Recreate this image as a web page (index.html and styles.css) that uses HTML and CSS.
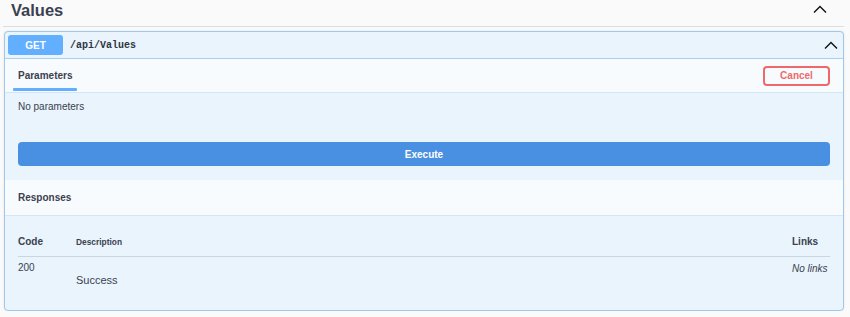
FILE: index.html
```html
<!DOCTYPE html>
<html>
<head>
<meta charset="utf-8">
<link rel="stylesheet" href="styles.css">
</head>
<body>
<div class="wrap">
  <div class="tag-header">
    <h3 class="tag-title">Values</h3>
    <svg class="chev chev-tag" width="14" height="8" viewBox="0 0 14 8"><path d="M1 7.5 L7 1.5 L13 7.5" fill="none" stroke="#111" stroke-width="1.4"/></svg>
  </div>
  <div class="opblock">
    <div class="summary">
      <span class="method">GET</span>
      <span class="path">/api/Values</span>
      <svg class="chev chev-op" width="14" height="8" viewBox="0 0 14 8"><path d="M1 7.5 L7 1.5 L13 7.5" fill="none" stroke="#111" stroke-width="1.4"/></svg>
    </div>
    <div class="tab-header">
      <div class="tab">Parameters</div>
      <button class="cancel">Cancel</button>
    </div>
    <div class="params">
      <p class="no-params">No parameters</p>
      <button class="execute">Execute</button>
    </div>
    <div class="resp-header">Responses</div>
    <div class="resp-body">
      <div class="resp-row resp-head">
        <div class="col-code head-code">Code</div>
        <div class="col-desc head-desc">Description</div>
        <div class="col-links head-links">Links</div>
      </div>
      <div class="resp-row resp-item">
        <div class="col-code item-code">200</div>
        <div class="col-desc item-desc"><p>Success</p></div>
        <div class="col-links item-links">No links</div>
      </div>
    </div>
  </div>
</div>
</body>
</html>
```

FILE: styles.css
```css
html, body {
  margin: 0;
  padding: 0;
  background: #fafafa;
}
body {
  font-family: "Liberation Sans", Arial, sans-serif;
  color: #3b4151;
}
.wrap {
  width: 841px;
  padding-left: 3px;
}
.tag-header {
  height: 26px;
  border-bottom: 1px solid #dcdee2;
  display: flex;
  justify-content: space-between;
  align-items: flex-start;
  padding-left: 8px;
  padding-right: 17px;
}
.tag-title {
  margin: 0;
  font-size: 16.5px;
  line-height: 20px;
  font-weight: bold;
}
.chev-tag {
  margin-top: 5px;
}
.opblock {
  margin-top: 4px;
  margin-left: 1px;
  border: 1px solid #9fc9ee;
  border-radius: 4px;
  background: #e9f4fc;
  box-shadow: 0 0 2px rgba(0,0,0,0.12);
}
.summary {
  height: 26px;
  display: flex;
  align-items: center;
  padding: 0 5px 0 3px;
  border-bottom: 1px solid #a9d0f0;
}
.method {
  width: 55px;
  height: 20px;
  border-radius: 3px;
  background: #61affe;
  color: #fff;
  font-weight: bold;
  font-size: 10px;
  display: flex;
  align-items: center;
  justify-content: center;
}
.path {
  margin-left: 7px;
  font-family: "Liberation Mono", "DejaVu Sans Mono", monospace;
  font-weight: bold;
  font-size: 10px;
  color: #2f3542;
  flex: 1;
}
.tab-header {
  height: 33px;
  display: flex;
  align-items: center;
  justify-content: space-between;
  padding: 0 13px 0 8px;
  background: #f8fbfd;
  border-bottom: 1px solid #d3e6f5;
}
.tab {
  position: relative;
  height: 100%;
  display: flex;
  align-items: center;
  padding: 0 5px 0 5px;
  font-size: 10px;
  font-weight: bold;
}
.tab::after {
  content: "";
  position: absolute;
  left: 0;
  right: 0;
  bottom: 1px;
  height: 3px;
  background: #61affe;
  border-radius: 1px;
}
.cancel {
  width: 67px;
  height: 20px;
  border: 2px solid #ee6a6a;
  border-radius: 4px;
  background: transparent;
  color: #ee6a6a;
  font-family: "Liberation Sans", Arial, sans-serif;
  font-weight: bold;
  font-size: 10px;
  padding: 0;
}
.params {
  padding: 8px 13px 14px;
}
.no-params {
  margin: 0;
  font-size: 10px;
  line-height: 12px;
}
.execute {
  display: block;
  width: 100%;
  height: 24px;
  margin-top: 29px;
  border: none;
  border-radius: 4px;
  background: #4990e2;
  color: #fff;
  font-family: "Liberation Sans", Arial, sans-serif;
  font-weight: bold;
  font-size: 10px;
  padding: 0;
}
.resp-header {
  height: 35px;
  display: flex;
  align-items: center;
  padding-left: 13px;
  background: #f8fbfd;
  border-bottom: 1px solid #d3e6f5;
  font-size: 10px;
  font-weight: bold;
}
.resp-body {
  padding: 0 13px 23px;
}
.resp-row {
  display: grid;
  grid-template-columns: 58px 1fr 38px;
}
.resp-head {
  padding-top: 20px;
  padding-bottom: 8px;
  border-bottom: 1px solid #c7d6e3;
  align-items: center;
}
.head-code {
  font-size: 10px;
  line-height: 12px;
  font-weight: bold;
}
.head-desc {
  font-size: 8.4px;
  line-height: 12px;
  font-weight: bold;
}
.head-links {
  font-size: 10px;
  line-height: 12px;
  font-weight: bold;
}
.resp-item {
  padding-top: 5px;
  align-items: start;
}
.item-code {
  font-size: 10px;
  line-height: 12px;
}
.item-desc p {
  margin: 12px 0 0;
  font-size: 11px;
  line-height: 13px;
}
.item-links {
  font-size: 10px;
  line-height: 12px;
  font-style: italic;
  padding-top: 1px;
  white-space: nowrap;
}
```
